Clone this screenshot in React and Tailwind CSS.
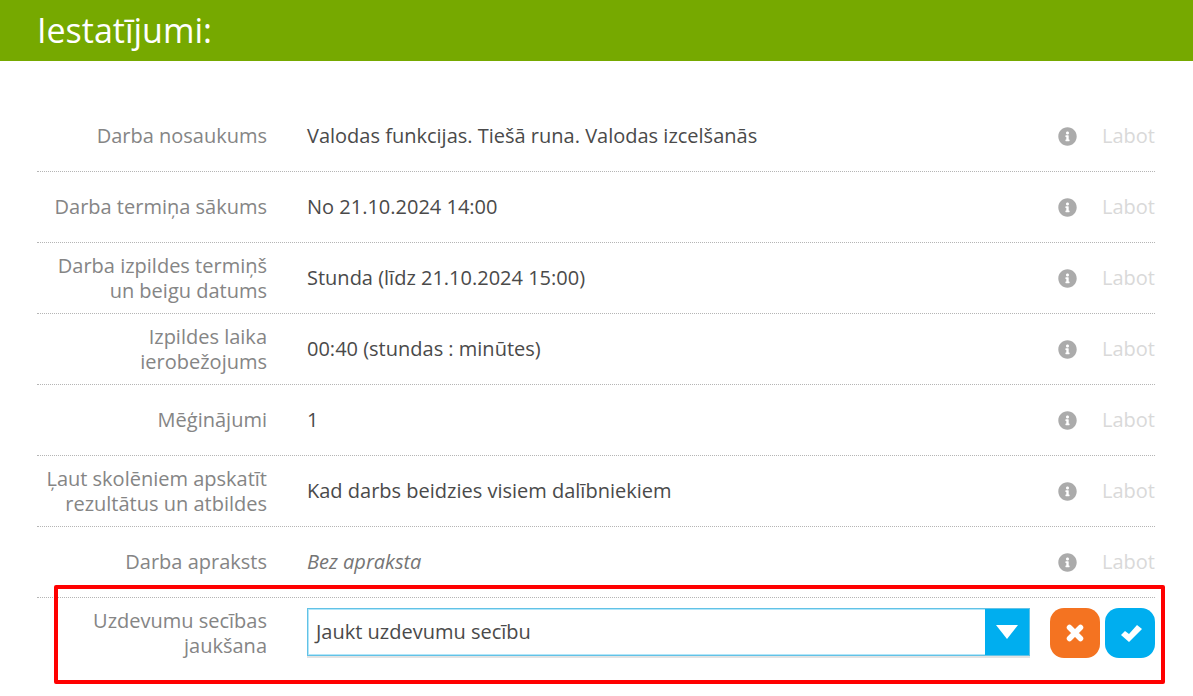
import React from "react";
import { FaInfoCircle } from "react-icons/fa";

const rows = [
  { label: ["Darba nosaukums"], value: "Valodas funkcijas. Tiešā runa. Valodas izcelšanās" },
  { label: ["Darba termiņa sākums"], value: "No 21.10.2024 14:00" },
  { label: ["Darba izpildes termiņš", "un beigu datums"], value: "Stunda (līdz 21.10.2024 15:00)" },
  { label: ["Izpildes laika", "ierobežojums"], value: "00:40 (stundas : minūtes)" },
  { label: ["Mēģinājumi"], value: "1" },
  { label: ["Ļaut skolēniem apskatīt", "rezultātus un atbildes"], value: "Kad darbs beidzies visiem dalībniekiem" },
  { label: ["Darba apraksts"], value: "Bez apraksta", italic: true },
];

function Label({ lines }) {
  return (
    <div className={`w-[230px] shrink-0 text-right text-[20px] leading-[25px] text-[#858585] ${lines.length === 1 ? "mb-px" : ""}`}>
      {lines.map((l) => (
        <div key={l}>{l}</div>
      ))}
    </div>
  );
}

export default function App() {
  return (
    <div className="relative h-[696px] w-[1193px] overflow-hidden bg-white font-['Open_Sans',sans-serif]">
      <div className="flex h-[61px] items-center bg-[#76a900] pl-[37px]">
        <h1 className="text-[34px] leading-[61px] text-white">Iestatījumi:</h1>
      </div>
      <div className="ml-[37px] mt-[40px] w-[1118px]">
        {rows.map((r) => (
          <div
            key={r.label[0]}
            className="flex h-[71px] items-center border-b border-dotted border-[#b5b5b5]"
          >
            <Label lines={r.label} />
            <div className={`mb-px ml-[40px] flex-1 text-[20px] leading-[25px] ${r.italic ? "italic text-[#757575]" : "text-[#4a4a4a]"}`}>
              {r.value}
            </div>
            <FaInfoCircle className="mr-[25px] mt-px text-[#ababab]" size={19} />
            <div className="mb-px text-[20px] leading-[25px] text-[#d9d9d9]">Labot</div>
          </div>
        ))}
        <div className="flex items-start pt-[10px]">
          <Label lines={["Uzdevumu secības", "jaukšana"]} />
          <div className="ml-[40px] flex h-[48px] w-[723px] border border-[#62c2e6] shadow-[0_2px_0_#e3e3e3,inset_0_0_0_1px_#b3e6f9]">
            <div className="flex-1 pl-[7px] text-[20px] leading-[46px] text-[#4a4a4a]">
              <span className="ml-px">Jaukt uzdevumu secību</span>
            </div>
            <div className="flex w-[44px] items-center justify-center bg-[#00aeef]">
              <svg width="22" height="14" viewBox="0 0 22 14"><path d="M0 0H22L11 14Z" fill="#fff" /></svg>
            </div>
          </div>
          <div className="ml-[20px] flex h-[50px] w-[50px] items-center justify-center rounded-[14px] bg-[#f47321]">
            <svg width="18" height="18" viewBox="0 0 18 18">
              <path d="M3.5 3.5L14.5 14.5M14.5 3.5L3.5 14.5" stroke="#fff" strokeWidth="5.5" strokeLinecap="round" />
            </svg>
          </div>
          <div className="ml-[5px] flex h-[50px] w-[50px] items-center justify-center rounded-[14px] bg-[#00aeef]">
            <svg className="translate-x-px" width="21" height="17" viewBox="0 0 21 17">
              <polygon points="0,10 4,6 8,9 16,0 21,4 8,17" fill="#fff" />
            </svg>
          </div>
        </div>
      </div>
      <div className="absolute left-[54px] top-[585px] h-[99px] w-[1111px] rounded-[2px] border-[4px] border-[#ff0000]" />
    </div>
  );
}
